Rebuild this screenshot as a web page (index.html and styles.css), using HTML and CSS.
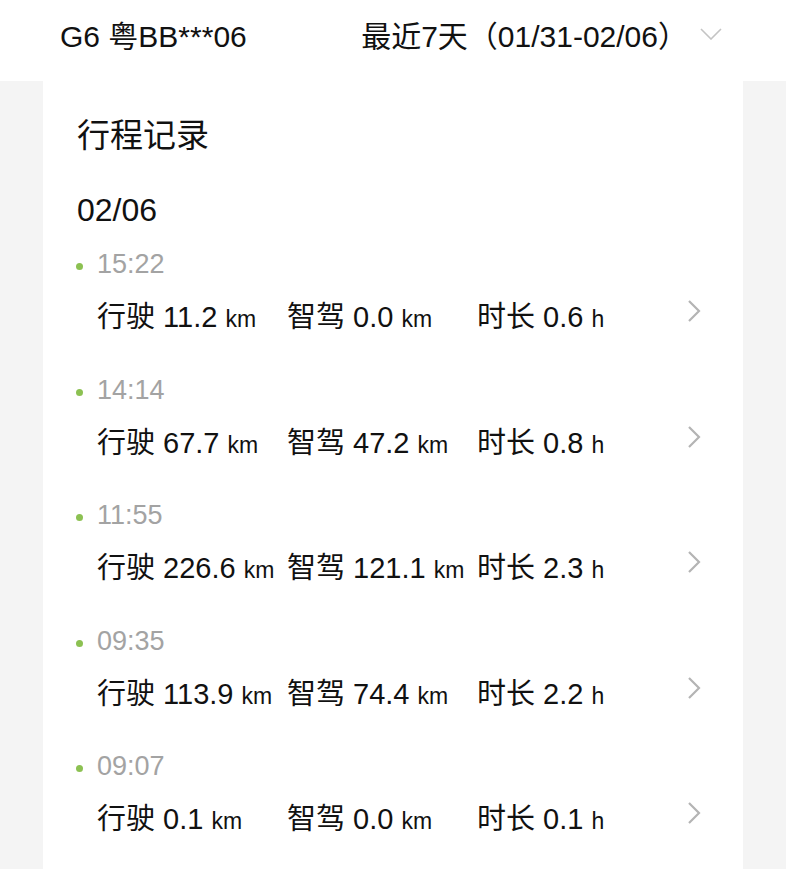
FILE: index.html
```html
<!DOCTYPE html>
<html lang="zh-CN">
<head>
<meta charset="utf-8">
<link rel="stylesheet" href="styles.css">
</head>
<body>
<header class="topbar">
  <div class="car">G6 粤BB***06</div>
  <div class="range">
    <span>最近7天（01/31-02/06）</span>
    <svg class="down" width="22" height="12" viewBox="0 0 22 12"><path d="M1 1 L11 11 L21 1" fill="none" stroke="#c4c4c4" stroke-width="1.6"/></svg>
  </div>
</header>
<main class="page">
  <section class="card">
    <h1 class="title">行程记录</h1>
    <div class="date">02/06</div>
    <div class="trip">
      <div class="time"><span class="dot"></span>15:22</div>
      <div class="row">
        <span class="cell">行驶 11.2 <small>km</small></span>
        <span class="cell">智驾 0.0 <small>km</small></span>
        <span class="cell">时长 0.6 <small>h</small></span>
        <svg class="arrow" width="16" height="24" viewBox="0 0 16 24"><path d="M2 2 L12 12 L2 22" fill="none" stroke="#b4b4b4" stroke-width="2.2"/></svg>
      </div>
    </div>
    <div class="trip">
      <div class="time"><span class="dot"></span>14:14</div>
      <div class="row">
        <span class="cell">行驶 67.7 <small>km</small></span>
        <span class="cell">智驾 47.2 <small>km</small></span>
        <span class="cell">时长 0.8 <small>h</small></span>
        <svg class="arrow" width="16" height="24" viewBox="0 0 16 24"><path d="M2 2 L12 12 L2 22" fill="none" stroke="#b4b4b4" stroke-width="2.2"/></svg>
      </div>
    </div>
    <div class="trip">
      <div class="time"><span class="dot"></span>11:55</div>
      <div class="row">
        <span class="cell">行驶 226.6 <small>km</small></span>
        <span class="cell">智驾 121.1 <small>km</small></span>
        <span class="cell">时长 2.3 <small>h</small></span>
        <svg class="arrow" width="16" height="24" viewBox="0 0 16 24"><path d="M2 2 L12 12 L2 22" fill="none" stroke="#b4b4b4" stroke-width="2.2"/></svg>
      </div>
    </div>
    <div class="trip">
      <div class="time"><span class="dot"></span>09:35</div>
      <div class="row">
        <span class="cell">行驶 113.9 <small>km</small></span>
        <span class="cell">智驾 74.4 <small>km</small></span>
        <span class="cell">时长 2.2 <small>h</small></span>
        <svg class="arrow" width="16" height="24" viewBox="0 0 16 24"><path d="M2 2 L12 12 L2 22" fill="none" stroke="#b4b4b4" stroke-width="2.2"/></svg>
      </div>
    </div>
    <div class="trip">
      <div class="time"><span class="dot"></span>09:07</div>
      <div class="row">
        <span class="cell">行驶 0.1 <small>km</small></span>
        <span class="cell">智驾 0.0 <small>km</small></span>
        <span class="cell">时长 0.1 <small>h</small></span>
        <svg class="arrow" width="16" height="24" viewBox="0 0 16 24"><path d="M2 2 L12 12 L2 22" fill="none" stroke="#b4b4b4" stroke-width="2.2"/></svg>
      </div>
    </div>
  </section>
</main>
</body>
</html>
```

FILE: styles.css
```css
html, body {
  margin: 0;
  padding: 0;
  background: #f4f4f4;
  font-family: "Liberation Sans", "Noto Sans CJK SC", sans-serif;
  color: #111;
  height: 869px;
  overflow: hidden;
}
.topbar {
  height: 81px;
  background: #fff;
  display: flex;
  align-items: center;
  justify-content: space-between;
  padding: 0 64px 14px 60px;
  box-sizing: border-box;
  font-size: 30px;
}
.range {
  display: flex;
  align-items: center;
  gap: 12px;
}
.range span {
  font-size: 30px;
}
.down {
  display: block;
}
.page {
  padding: 0 43px;
}
.card {
  background: #fff;
  padding: 33px 0 0 34px;
  min-height: 800px;
  box-sizing: border-box;
}
.title {
  margin: 0;
  font-weight: normal;
  font-size: 33px;
  line-height: 44px;
  height: 44px;
}
.date {
  margin-top: 32px;
  font-size: 32px;
  line-height: 40px;
  height: 40px;
  margin-bottom: 16px;
}
.trip {
  height: 125.5px;
}
.time {
  position: relative;
  height: 36px;
  line-height: 36px;
  font-size: 27px;
  color: #a3a3a3;
  padding-left: 20px;
}
.dot {
  position: absolute;
  left: -1px;
  top: 17px;
  width: 7px;
  height: 7px;
  border-radius: 50%;
  background: #8cc152;
}
.row {
  margin-top: 12px;
  height: 40px;
  display: flex;
  align-items: center;
  padding-left: 20px;
  font-size: 29px;
  white-space: nowrap;
}
.cell {
  min-width: 190px;
  flex: none;
}
.cell small {
  font-size: 23px;
}
.arrow {
  margin-left: 20px;
  margin-top: -6px;
}
```
